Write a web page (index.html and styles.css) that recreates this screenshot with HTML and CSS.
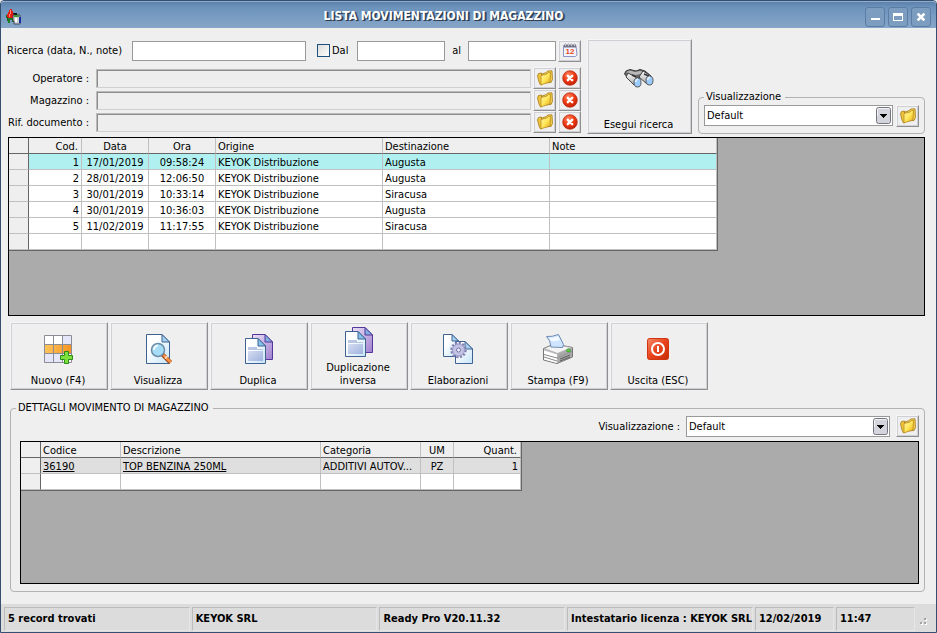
FILE: index.html
```
<!DOCTYPE html>
<html lang="it">
<head>
    <meta charset="UTF-8">
    <meta name="viewport" content="width=device-width, initial-scale=1.0">
    <title>Lista movimentazioni di magazzino</title>
    <link rel="stylesheet" href="styles.css">
</head>
<body>

    <!-- Shared icons -->
    <svg class="defs" aria-hidden="true">
        <defs>
            <linearGradient id="gold" x1="0" y1="0" x2="1" y2="1">
                <stop offset="0" stop-color="#fff6a8"/>
                <stop offset="0.5" stop-color="#ffe65a"/>
                <stop offset="1" stop-color="#e3a513"/>
            </linearGradient>
            <radialGradient id="redball" cx="0.4" cy="0.3" r="0.8">
                <stop offset="0" stop-color="#ff8a66"/>
                <stop offset="0.5" stop-color="#ee3a12"/>
                <stop offset="1" stop-color="#b81a06"/>
            </radialGradient>
            <linearGradient id="paper" x1="0" y1="0" x2="1" y2="1">
                <stop offset="0.3" stop-color="#ffffff"/>
                <stop offset="1" stop-color="#c4e4f8"/>
            </linearGradient>
            <linearGradient id="violet" x1="0" y1="0" x2="1" y2="1">
                <stop offset="0" stop-color="#eadff5"/>
                <stop offset="1" stop-color="#a07fd0"/>
            </linearGradient>
            <linearGradient id="orange" x1="0" y1="0" x2="1" y2="0">
                <stop offset="0" stop-color="#ffc55c"/>
                <stop offset="1" stop-color="#f79420"/>
            </linearGradient>
            <linearGradient id="redbox" x1="0" y1="0" x2="1" y2="1">
                <stop offset="0" stop-color="#f58a6a"/>
                <stop offset="0.5" stop-color="#e8421a"/>
                <stop offset="1" stop-color="#c62d08"/>
            </linearGradient>
            <linearGradient id="metal" x1="0" y1="0" x2="0" y2="1">
                <stop offset="0" stop-color="#fafafa"/>
                <stop offset="1" stop-color="#a9a9a9"/>
            </linearGradient>
            <linearGradient id="lavender" x1="0" y1="0" x2="1" y2="1">
                <stop offset="0" stop-color="#c8d2ec"/>
                <stop offset="1" stop-color="#8fa0d4"/>
            </linearGradient>
        </defs>

        <symbol id="folder" viewBox="0 0 16 16">
            <path d="M0.5 6 1.500 3.500 4.500 3 5 14.500 3.500 15 2 12z" fill="#f0c53c" stroke="#a5791a" stroke-width="0.8"/>
            <path d="M5 4 9.500 2.500 10.500 1 15 0.8 15.500 9.500 14 12.500 5 13z" fill="#f3cf4a" stroke="#a5791a" stroke-width="0.8"/>
            <path d="M4 5.500 10 4 11.500 2.500 13.500 2.500 13 12 4 14.800z" fill="url(#gold)" stroke="#b98d22" stroke-width="0.8"/>
        </symbol>

        <symbol id="cancel" viewBox="0 0 16 16">
            <circle cx="8" cy="8" r="7.3" fill="url(#redball)" stroke="#b5260e" stroke-width="0.7"/>
            <path d="M5.800 5.800 10.200 10.200M10.200 5.800 5.800 10.200" stroke="#fff" stroke-width="2.400" stroke-linecap="round"/>
        </symbol>

        <symbol id="copy" viewBox="0 0 32 32">
            <path d="M10.500 1.500H23L30.500 9V26.500H10.500z" fill="url(#violet)" stroke="#54379a"/>
            <path d="M23 1.500V9H30.500z" fill="#7fb0e0" stroke="#54379a"/>
            <path d="M3.500 5.500H16L23.500 13V30.500H3.500z" fill="url(#paper)" stroke="#3f6293"/>
            <path d="M16 5.500V13H23.500z" fill="#86c1ec" stroke="#3f6293"/>
            <path d="M6 14H15V16H21V17H6z" fill="#b9c6e4"/>
            <path d="M6 18H21V28H6z" fill="url(#lavender)" opacity="0.75"/>
        </symbol>

        <symbol id="arrow" viewBox="0 0 15 17">
            <rect x="0.5" y="0.5" width="14" height="16" rx="2" fill="#d4d4dc" stroke="#74747c"/>
            <path d="M1.500 9V2.500Q1.500 1.500 2.500 1.500H12.500Q13.500 1.500 13.500 2.500" fill="none" stroke="#f2f2f6"/>
            <path d="M4 7H11V8H10V9H9V10H8V11H7V10H6V9H5V8H4z" fill="#000"/>
        </symbol>
    </svg>

    <div class="window">
        <header class="titlebar">
            <svg class="app-icon" viewBox="0 0 16 16" aria-hidden="true">
                <path d="M0 6H2V9H3V12H1V9H0z" fill="#245c1c"/>
                <path d="M4 0H6V2H7V5H8V8H9V10H2V8H1V5H2V3H3V1H4z" fill="#e31b12"/>
                <path d="M4 1H5V5H4zM3 5H4V8H3z" fill="#ff8b7c"/>
                <path d="M2 9H8V13H6V11H4V14H2z" fill="#1d7a26"/>
                <path d="M7 4H11V6H9V8H8V5H7z" fill="#151515"/>
                <path d="M7 6H14V15H8V12H7z" fill="#c8ccd2" stroke="#30343c" stroke-width="0.8"/>
                <path d="M8 6H13V8H8z" fill="#3b9c35"/>
                <path d="M13 8H15V14H13z" fill="#1c2b9c"/>
                <path d="M9 9H11V13H9z" fill="#fff"/>
            </svg>
            <h1>LISTA MOVIMENTAZIONI DI MAGAZZINO</h1>
            <div class="window-buttons">
                <button type="button" aria-label="Riduci">
                    <svg viewBox="0 0 18 18"><path d="M5 10H14V12H5z" fill="#fff"/></svg>
                </button>
                <button type="button" aria-label="Ingrandisci">
                    <svg viewBox="0 0 18 18"><path d="M4 5H14V13H4zM5 8V12H13V8z" fill="#fff" fill-rule="evenodd"/></svg>
                </button>
                <button type="button" aria-label="Chiudi">
                    <svg viewBox="0 0 18 18"><path d="M6.500 6.500 11.500 11.500M11.500 6.500 6.500 11.500" stroke="#fff" stroke-width="2.500" stroke-linecap="square"/></svg>
                </button>
            </div>
        </header>

        <main>
            <form class="search" onsubmit="return false">
                <div class="filters">
                    <div class="filter-row first">
                        <label class="search-label" for="ricerca">Ricerca (data, N., note)</label>
                        <input class="text query" type="text" id="ricerca">
                        <input class="check" type="checkbox" id="dal">
                        <label class="from-label" for="dal">Dal</label>
                        <input class="text date" type="text" id="data-dal" aria-label="Data dal">
                        <label class="to-label" for="data-al">al</label>
                        <input class="text date" type="text" id="data-al">
                        <button class="small" type="button" aria-label="Calendario">
                            <svg viewBox="0 0 16 16">
                                <path d="M1.500 2.500H14L15 12 13.500 13.500H1.500z" fill="#f4f5ff" stroke="#8c94c8"/>
                                <path d="M2 1.500H14V4.500H2z" fill="#74748a"/>
                                <path d="M3.500 0V3M6.500 0V3M9.500 0V3M12.500 0V3" stroke="#c4c4cc"/>
                                <text x="8" y="11" class="cal-day">12</text>
                            </svg>
                        </button>
                    </div>
                    <div class="filter-row">
                        <label for="operatore">Operatore :</label>
                        <input class="sunken" type="text" id="operatore" readonly>
                        <button class="small" type="button" aria-label="Scegli operatore"><svg><use href="#folder"/></svg></button>
                        <button class="small" type="button" aria-label="Annulla operatore"><svg><use href="#cancel"/></svg></button>
                    </div>
                    <div class="filter-row">
                        <label for="magazzino">Magazzino :</label>
                        <input class="sunken" type="text" id="magazzino" readonly>
                        <button class="small" type="button" aria-label="Scegli magazzino"><svg><use href="#folder"/></svg></button>
                        <button class="small" type="button" aria-label="Annulla magazzino"><svg><use href="#cancel"/></svg></button>
                    </div>
                    <div class="filter-row">
                        <label for="documento">Rif. documento :</label>
                        <input class="sunken" type="text" id="documento" readonly>
                        <button class="small" type="button" aria-label="Scegli documento"><svg><use href="#folder"/></svg></button>
                        <button class="small" type="button" aria-label="Annulla documento"><svg><use href="#cancel"/></svg></button>
                    </div>
                </div>

                <button class="big run" type="submit">
                    <svg viewBox="0 0 32 32">
                        <path d="M1.500 11 3 8 7 6.500 13 8 17 6.500 22 8 28 13 23 17 18 13 14 15 10 20z" fill="#6c6c6c" stroke="#333"/>
                        <path d="M3 9 7 7.500 12 9 17 8 21 9 17 11 13 12 8 11z" fill="#b8b8b8"/>
                        <path d="M5 10 15 15 11 22 3 14z" fill="url(#metal)" stroke="#444"/>
                        <path d="M20 8 28 13 24 21 16 14z" fill="url(#metal)" stroke="#444"/>
                        <path d="M9 12 13 14M21 11 26 13" stroke="#333" stroke-width="1.500"/>
                        <ellipse cx="14.500" cy="19.500" rx="3.500" ry="4.500" fill="#9cccff" stroke="#555"/>
                        <ellipse cx="26.500" cy="17.500" rx="3.500" ry="4.500" fill="#9cccff" stroke="#555"/>
                        <path d="M12.500 19Q13 16.500 15 16M24.500 17Q25 14.500 27 14" fill="none" stroke="#e8f5ff" stroke-width="1.500"/>
                    </svg>
                    Esegui ricerca
                </button>

                <fieldset class="view">
                    <legend>Visualizzazione</legend>
                    <span class="combo">
                        <select aria-label="Visualizzazione"><option>Default</option></select>
                        <svg><use href="#arrow"/></svg>
                    </span>
                    <button class="small" type="button" aria-label="Gestisci visualizzazioni"><svg><use href="#folder"/></svg></button>
                </fieldset>
            </form>

            <div class="grid movements">
                <table>
                    <colgroup>
                        <col class="w-mark"><col class="w-cod"><col class="w-time"><col class="w-time"><col class="w-place"><col class="w-place"><col class="w-place">
                    </colgroup>
                    <thead>
                        <tr><th></th><th class="right">Cod.</th><th class="center">Data</th><th class="center">Ora</th><th>Origine</th><th>Destinazione</th><th>Note</th></tr>
                    </thead>
                    <tbody>
                        <tr class="current"><th></th><td class="right">1</td><td class="center">17/01/2019</td><td class="center">09:58:24</td><td>KEYOK Distribuzione</td><td>Augusta</td><td></td></tr>
                        <tr><th></th><td class="right">2</td><td class="center">28/01/2019</td><td class="center">12:06:50</td><td>KEYOK Distribuzione</td><td>Augusta</td><td></td></tr>
                        <tr><th></th><td class="right">3</td><td class="center">30/01/2019</td><td class="center">10:33:14</td><td>KEYOK Distribuzione</td><td>Siracusa</td><td></td></tr>
                        <tr><th></th><td class="right">4</td><td class="center">30/01/2019</td><td class="center">10:36:03</td><td>KEYOK Distribuzione</td><td>Augusta</td><td></td></tr>
                        <tr><th></th><td class="right">5</td><td class="center">11/02/2019</td><td class="center">11:17:55</td><td>KEYOK Distribuzione</td><td>Siracusa</td><td></td></tr>
                        <tr><th></th><td></td><td></td><td></td><td></td><td></td><td></td></tr>
                    </tbody>
                </table>
            </div>

            <div class="toolbar">
                <button class="big" type="button">
                    <svg viewBox="0 0 32 32">
                        <path d="M2.500 2.500H29.500V29.500H2.500z" fill="#fff"/>
                        <path d="M20 3H29V11H20zM3 20H11V29H3zM11 20H20V29H11z" fill="#e6e6fb"/>
                        <path d="M2.500 11.500H29.500V20.500H2.500z" fill="url(#orange)"/>
                        <path d="M2.500 2.500H29.500V29.500H2.500zM11.500 2.500V29.500M20.500 2.500V29.500M2.500 11.500H29.500M2.500 20.500H29.500" fill="none" stroke="#8c8c94"/>
                        <path d="M22.500 18.500H26.500V22.500H30.500V26.500H26.500V30.500H22.500V26.500H18.500V22.500H22.500z" fill="#7ee03c" stroke="#2b8a1c"/>
                    </svg>
                    Nuovo (F4)
                </button>
                <button class="big" type="button">
                    <svg viewBox="0 0 32 32">
                        <path d="M4.500 1.500H20L27.500 9V30.500H4.500z" fill="url(#paper)" stroke="#3f6293"/>
                        <path d="M20 1.500V9H27.500z" fill="#a8d2f0" stroke="#3f6293"/>
                        <path d="M20.500 21.500 28.500 29.500" stroke="#a04818" stroke-width="4.500"/>
                        <path d="M21.500 22 28.500 29" stroke="#ff9240" stroke-width="2.500"/>
                        <path d="M23 25.500 25.500 23" stroke="#f6e8dc" stroke-width="1.500"/>
                        <circle cx="16" cy="17" r="6.500" fill="#a6dcf6" stroke="#6c8ca8" stroke-width="1.500"/>
                        <path d="M12 17Q12 13 16 12.500" fill="none" stroke="#f0fbff" stroke-width="2"/>
                    </svg>
                    Visualizza
                </button>
                <button class="big" type="button">
                    <svg><use href="#copy"/></svg>
                    Duplica
                </button>
                <button class="big" type="button">
                    <svg><use href="#copy"/></svg>
                    Duplicazione inversa
                </button>
                <button class="big" type="button">
                    <svg viewBox="0 0 32 32">
                        <path d="M1.500 1.500H10L16.500 8V23.500H1.500z" fill="url(#paper)" stroke="#3f6293"/>
                        <path d="M10 1.500V8H16.500z" fill="#a8d2f0" stroke="#3f6293"/>
                        <path d="M13.500 8.500H23L30.500 16V30.500H13.500z" fill="url(#paper)" stroke="#3f6293"/>
                        <path d="M23 8.500V16H30.500z" fill="#a8d2f0" stroke="#3f6293"/>
                        <circle cx="16.500" cy="17" r="7" fill="none" stroke="#8280b4" stroke-width="2.500" stroke-dasharray="2.200 1.465"/>
                        <circle cx="16.500" cy="17" r="6" fill="#c2c2e4" stroke="#9896c4"/>
                        <circle cx="16.500" cy="17" r="2" fill="#eef" stroke="#7876a8"/>
                    </svg>
                    Elaborazioni
                </button>
                <button class="big" type="button">
                    <svg viewBox="0 0 32 32">
                        <path d="M1.500 15.500 12 11 30.500 14.500V24L15 30.500 1.500 27z" fill="#c4c4c4" stroke="#777"/>
                        <path d="M2 15.500 12 11.500 30 14.500 15.500 20.500z" fill="#f4f4f4" stroke="#999" stroke-width="0.700"/>
                        <path d="M2 17.500 15 21.500V30L2 26.500z" fill="#fff"/>
                        <path d="M2 21.500 15 25 30 18.500M2 24 15 28" fill="none" stroke="#888"/>
                        <path d="M15.500 21 30 15.500V24L15.500 30z" fill="#9a9a9a" opacity="0.650"/>
                        <path d="M18 26 28 22M18 28 28 24" stroke="#5c5c5c"/>
                        <path d="M4.500 3.500Q10 4 16.500 1.500L21.500 11.500 20.500 14.500 9 14Q8.500 7 4.500 3.500z" fill="#cfe5ff" stroke="#6d8cb4"/>
                        <path d="M7 5Q12 5 16 3L18 7Q13 9 9 8z" fill="#f2f8ff"/>
                        <ellipse cx="26.500" cy="17.500" rx="2" ry="1.500" fill="#58d838" stroke="#358c28" stroke-width="0.700"/>
                    </svg>
                    Stampa (F9)
                </button>
                <button class="big" type="button">
                    <svg viewBox="0 0 32 32">
                        <rect x="5.500" y="5.500" width="21" height="21" rx="2" fill="url(#redbox)" stroke="#cf3510"/>
                        <circle cx="16" cy="16" r="6" fill="none" stroke="#fff" stroke-width="2"/>
                        <path d="M16 13V19" stroke="#fff" stroke-width="2"/>
                    </svg>
                    Uscita (ESC)
                </button>
            </div>

            <fieldset class="details">
                <legend>DETTAGLI MOVIMENTO DI MAGAZZINO</legend>
                <div class="details-view">
                    <label for="vista-dettagli">Visualizzazione :</label>
                    <span class="combo">
                        <select id="vista-dettagli"><option>Default</option></select>
                        <svg><use href="#arrow"/></svg>
                    </span>
                    <button class="small" type="button" aria-label="Gestisci visualizzazioni"><svg><use href="#folder"/></svg></button>
                </div>
                <div class="grid articles">
                    <table>
                        <colgroup>
                            <col class="w-mark"><col class="w-code"><col class="w-desc"><col class="w-cat"><col class="w-um"><col class="w-qty">
                        </colgroup>
                        <thead>
                            <tr><th></th><th>Codice</th><th>Descrizione</th><th>Categoria</th><th class="center">UM</th><th class="right">Quant.</th></tr>
                        </thead>
                        <tbody>
                            <tr class="locked"><th></th><td><a href="#">36190</a></td><td><a href="#">TOP BENZINA 250ML</a></td><td>ADDITIVI AUTOV...</td><td class="center">PZ</td><td class="right">1</td></tr>
                            <tr><th></th><td></td><td></td><td></td><td></td><td></td></tr>
                        </tbody>
                    </table>
                </div>
            </fieldset>
        </main>

        <footer class="statusbar">
            <span class="wide">5 record trovati</span>
            <span class="wide">KEYOK SRL</span>
            <span class="wide">Ready Pro V20.11.32</span>
            <span class="wide">Intestatario licenza : KEYOK SRL</span>
            <span>12/02/2019</span>
            <span>11:47</span>
            <svg viewBox="0 0 12 12" aria-hidden="true"><path d="M7 3H9V5H7zM7 7H9V9H7zM3 7H5V9H3z" fill="#a4a4a4"/><path d="M9 4V5H8V6H10V4zM9 8V9H8V10H10V8zM5 8V9H4V10H6V8z" fill="#fff"/></svg>
        </footer>
    </div>

</body>
</html>
```

FILE: styles.css
```
* {
    box-sizing: border-box;
}
body {
    margin: 0;
    font-family: "DejaVu Sans Condensed", Tahoma, "DejaVu Sans", sans-serif;
    font-size: 11px;
    line-height: 13px;
    color: #000;
    background-color: #efefef;
}
input, select, button {
    margin: 0;
    padding: 0;
    font: inherit;
    color: inherit;
    border-radius: 0;
}
svg {
    display: block;
    flex: none;
}
.defs {
    position: absolute;
    width: 0;
    height: 0;
}
.window {
    min-height: 100vh;
    display: flex;
    flex-direction: column;
    background-color: #efefef;
    border: 1px solid #35506f;
    border-radius: 4px 4px 0 0;
}

/* Title bar */
.titlebar {
    display: flex;
    align-items: center;
    height: 27px;
    padding: 3px 5px 0;
    background: linear-gradient(#5d82ab, #6c93bc 20%, #87a6c8);
    border-top: 1px solid #8fabcb;
    border-radius: 3px 3px 0 0;
}
.app-icon {
    width: 16px;
    height: 16px;
}
.titlebar h1 {
    flex: 1;
    margin: 0;
    text-align: center;
    font-size: 12px;
    color: #fff;
    text-shadow: 1px 1px 0 #2c3e52, 2px 1px 0 #3c5068;
}
.window-buttons {
    display: flex;
    gap: 3px;
}
.window-buttons button {
    width: 20px;
    height: 20px;
    background-color: #7d9dc0;
    border: 1px solid #5b7da5;
    border-radius: 3px;
}

/* Content */
main {
    flex: 1;
    display: flex;
    flex-direction: column;
    padding: 11px 11px 12px 7px;
}
.search {
    display: flex;
    gap: 6px;
    margin-bottom: 3px;
}
.filters {
    flex: 1;
    min-width: 0;
    margin-left: -1px;
    padding-bottom: 1px;
}
.filter-row {
    display: flex;
    align-items: center;
    gap: 2px;
    height: 22px;
}
.filter-row.first {
    height: 23px;
    margin-bottom: 5px;
}
.filter-row label {
    flex: none;
    width: 82px;
    margin-right: 5px;
    text-align: right;
    white-space: nowrap;
}
.filter-row .search-label {
    width: 118px;
    text-align: left;
}
.filter-row .from-label {
    width: 18px;
    text-align: left;
}
.filter-row .to-label {
    width: 14px;
}
.text {
    height: 20px;
    background-color: #fff;
    border: 1px solid #999;
    min-width: 0;
}
.query {
    flex: 2;
    margin-right: 9px;
}
.date {
    flex: 1;
}
.check {
    appearance: none;
    flex: none;
    width: 13px;
    height: 13px;
    background: linear-gradient(135deg, #dcdcd8, #fff);
    border: 1px solid #1c5180;
}
.sunken {
    flex: 1;
    min-width: 0;
    height: 19px;
    background-color: #eee;
    border: 1px solid;
    border-color: #bbb #d0d0d0 #d0d0d0 #bbb;
    box-shadow: inset 1px 1px 0 #8c8c8c;
}
.small, .big {
    background-color: #efefef;
    border: 1px solid;
    border-color: #f6f6f6 #8f8f8f #8f8f8f #f6f6f6;
    box-shadow: inset 0 0 0 1px #cfcfd6;
}
.small {
    flex: none;
    width: 23px;
    height: 22px;
}
.small svg {
    width: 16px;
    height: 16px;
    margin: 0 auto;
}
.cal-day {
    font-family: "Liberation Sans", sans-serif;
    font-size: 8px;
    font-weight: bold;
    fill: #e8491c;
    text-anchor: middle;
}
.big {
    display: flex;
    flex: none;
    flex-direction: column;
    align-items: center;
    width: 98px;
    height: 68px;
    padding: 0 9px 2px 7px;
    line-height: 13px;
}
.big svg {
    width: 32px;
    height: 32px;
    margin: auto;
}
.run {
    width: 105px;
    height: auto;
}
fieldset {
    min-width: 0;
    margin: 0;
    border: 1px solid #b2b2b2;
    border-radius: 4px;
}
legend {
    height: 14px;
    padding: 0 4px 0 2px;
}
.view {
    display: flex;
    flex: none;
    gap: 3px;
    align-self: flex-end;
    width: 227px;
    padding: 1px 5px 6px;
}
.combo {
    position: relative;
    flex: 1;
}
.combo select {
    appearance: none;
    display: block;
    width: 100%;
    height: 21px;
    padding: 0 20px 0 2px;
    background-color: #fff;
    border: 1px solid #999;
}
.combo svg {
    position: absolute;
    top: 2px;
    right: 2px;
    width: 15px;
    height: 17px;
    pointer-events: none;
}

/* Data grids */
.grid {
    background-color: #ababab;
    border: 1px solid #000;
}
.movements {
    min-height: 179px;
}
.articles {
    min-height: 143px;
}
table {
    table-layout: fixed;
    width: 0;
    border-collapse: separate;
    border-spacing: 0;
    border-right: 1px solid #666;
    border-bottom: 1px solid #666;
}
th, td {
    height: 16px;
    padding: 2px 2px 0;
    font-weight: normal;
    line-height: 13px;
    text-align: left;
    white-space: nowrap;
    overflow: hidden;
    background-color: #fff;
    border-right: 1px solid #c0c0c0;
    border-bottom: 1px solid #c0c0c0;
}
th {
    background-color: #efefef;
}
thead th {
    border-bottom-color: #666;
}
th:first-child {
    border-right-color: #666;
}
.current td {
    background-color: #b0f0f0;
}
.locked td {
    background-color: #dfdfdf;
}
.right {
    text-align: right;
}
thead .right {
    padding-right: 3px;
}
.center {
    text-align: center;
}
td a {
    color: #000;
}
.w-mark { width: 20px; }
.w-cod { width: 53px; }
.w-time { width: 67px; }
.w-place { width: 167px; }
.w-code { width: 80px; }
.w-desc { width: 200px; }
.w-cat { width: 100px; }
.w-um { width: 33px; }
.w-qty { width: 67px; }

.toolbar {
    display: flex;
    flex-wrap: wrap;
    gap: 2px;
    margin: 6px 0 11px 2px;
}
.details {
    flex: 1;
    margin-left: 2px;
    padding: 0 5px 7px 9px;
}
.details legend {
    margin-left: -4px;
}
.details-view {
    display: flex;
    align-items: center;
    justify-content: flex-end;
    gap: 6px;
    margin-bottom: 4px;
}
.details-view .combo {
    flex: none;
    width: 204px;
}

/* Status bar */
.statusbar {
    display: flex;
    gap: 2px;
    height: 28px;
    padding: 3px 7px 1px 3px;
    background-color: #dcdcdc;
    font-weight: bold;
}
.statusbar span {
    width: 79px;
    padding: 4px 0 0 3px;
    white-space: nowrap;
    border: 1px solid;
    border-color: #bcbcbc #e6e6e6 #e6e6e6 #bcbcbc;
}
.statusbar .wide {
    flex: 1;
    width: auto;
}
.statusbar svg {
    align-self: flex-end;
    width: 12px;
    height: 12px;
    margin-bottom: 4px;
}
```
